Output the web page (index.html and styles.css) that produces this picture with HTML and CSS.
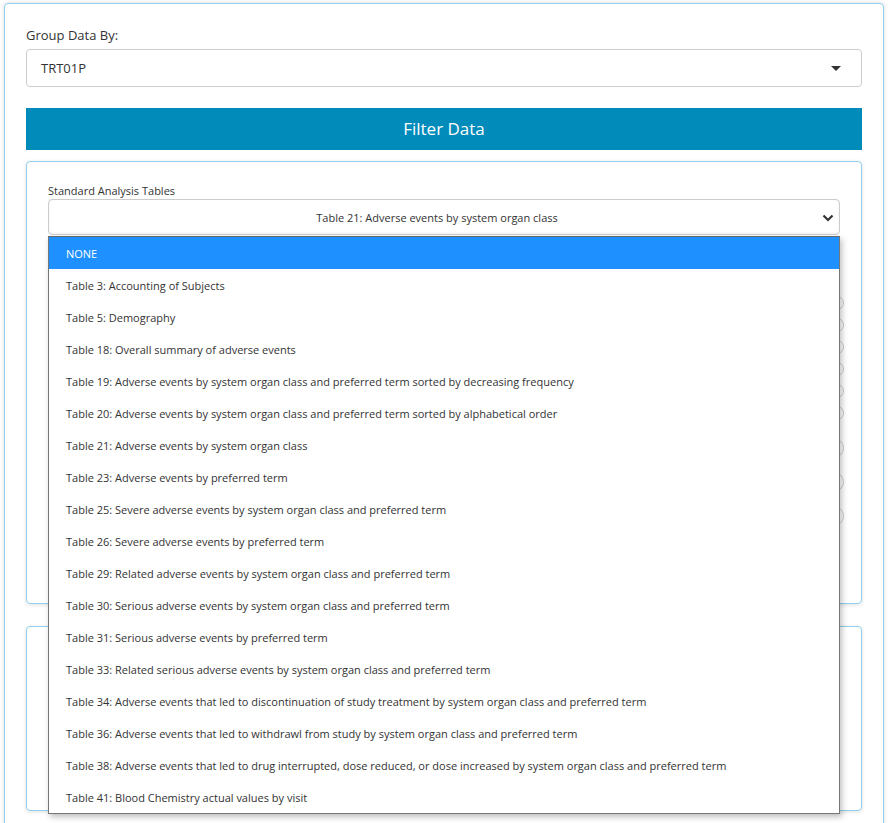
FILE: index.html
```html
<!DOCTYPE html>
<html lang="en">
<head>
  <meta charset="UTF-8" />
  <title>Analysis Tables</title>
  <link rel="stylesheet" href="styles.css">
</head>
<body>

<div class="panel">
  <label class="field-label">Group Data By:</label>
  <div class="group-select">
    <span>TRT01P</span>
    <span class="caret"></span>
  </div>

  <button class="filter-btn">Filter Data</button>

  <div class="card tables-card">
    <label class="small-label">Standard Analysis Tables</label>
    <div class="select-wrap">
      <div class="table-select">
        <span>Table 21: Adverse events by system organ class</span>
        <svg class="chevron" width="12" height="8" viewBox="0 0 12 8"><path d="M1.5 1.5 L6 6 L10.5 1.5" fill="none" stroke="#333" stroke-width="2.2"/></svg>
      </div>
      <ul class="dropdown">
        <li class="active">NONE</li>
        <li>Table 3: Accounting of Subjects</li>
        <li>Table 5: Demography</li>
        <li>Table 18: Overall summary of adverse events</li>
        <li>Table 19: Adverse events by system organ class and preferred term sorted by decreasing frequency</li>
        <li>Table 20: Adverse events by system organ class and preferred term sorted by alphabetical order</li>
        <li>Table 21: Adverse events by system organ class</li>
        <li>Table 23: Adverse events by preferred term</li>
        <li>Table 25: Severe adverse events by system organ class and preferred term</li>
        <li>Table 26: Severe adverse events by preferred term</li>
        <li>Table 29: Related adverse events by system organ class and preferred term</li>
        <li>Table 30: Serious adverse events by system organ class and preferred term</li>
        <li>Table 31: Serious adverse events by preferred term</li>
        <li>Table 33: Related serious adverse events by system organ class and preferred term</li>
        <li>Table 34: Adverse events that led to discontinuation of study treatment by system organ class and preferred term</li>
        <li>Table 36: Adverse events that led to withdrawl from study by system organ class and preferred term</li>
        <li>Table 38: Adverse events that led to drug interrupted, dose reduced, or dose increased by system organ class and preferred term</li>
        <li>Table 41: Blood Chemistry actual values by visit</li>
      </ul>
    </div>

    <!-- options underneath the open list -->
    <div class="options">
      <div class="opt"><span class="dot"></span></div>
      <div class="opt"><span class="dot"></span></div>
      <div class="opt"><span class="dot"></span></div>
      <div class="opt"><span class="dot"></span></div>
      <div class="opt"><span class="dot"></span></div>
      <div class="opt"><span class="dot"></span></div>
      <div class="opt big first-big"><span class="dot"></span></div>
      <div class="opt big"><span class="dot"></span></div>
      <div class="opt big"><span class="dot"></span></div>
    </div>
  </div>

  <div class="card second-card"></div>
</div>

</body>
</html>
```

FILE: styles.css
```css
html, body {
    margin: 0;
    padding: 0;
    background: #fff;
    font-family: 'Open Sans', sans-serif;
    color: #333;
    overflow: hidden;
}

.panel {
    margin: 3px 0 0 4px;
    width: 880px;
    box-sizing: border-box;
    border: 1px solid #8fd0ea;
    border-radius: 4px;
    padding: 21px 21px 10px 21px;
    box-shadow: 0 0 4px rgba(0,0,0,0.15);
    min-height: 840px;
}

.field-label {
    display: block;
    font-size: 13px;
    line-height: 20px;
    margin-bottom: 4px;
}

.group-select {
    height: 38px;
    box-sizing: border-box;
    border: 1px solid #ccc;
    border-radius: 4px;
    display: flex;
    align-items: center;
    justify-content: space-between;
    padding: 0 20px 0 14px;
    font-size: 13px;
}
.caret {
    width: 0;
    height: 0;
    border-left: 5px solid transparent;
    border-right: 5px solid transparent;
    border-top: 5px solid #333;
}

.filter-btn {
    display: block;
    width: 100%;
    height: 42px;
    margin-top: 21px;
    border: none;
    background: #008bba;
    color: #fff;
    font-family: 'Open Sans', sans-serif;
    font-size: 17px;
    padding-bottom: 2px;
}

.card {
    border: 1px solid #8fd0ea;
    border-radius: 4px;
    box-shadow: 0 1px 4px rgba(0,0,0,0.12);
    box-sizing: border-box;
}
.tables-card {
    margin-top: 11px;
    padding: 20px 21px 70px 21px;
    height: 443px;
}
.second-card {
    margin-top: 22px;
    height: 185px;
}

.small-label {
    display: block;
    font-size: 11px;
    line-height: 17px;
}

.select-wrap {
    position: relative;
}
.table-select {
    height: 36px;
    box-sizing: border-box;
    border: 1px solid #ccc;
    border-radius: 4px;
    box-shadow: inset 0 -1px 3px rgba(0,0,0,0.06);
    display: flex;
    align-items: center;
    justify-content: center;
    padding-right: 14px;
    font-size: 11px;
    position: relative;
}
.chevron {
    position: absolute;
    right: 5px;
    top: 14px;
}

.dropdown {
    position: absolute;
    top: 37px;
    left: 0;
    width: 790px;
    margin: 0;
    padding: 0;
    list-style: none;
    background: #fff;
    border: 1px solid #777;
    border-top: 1px solid #666;
    box-shadow: 2px 3px 6px rgba(0,0,0,0.25);
    z-index: 5;
}
.dropdown li {
    height: 32px;
    line-height: 33px;
    padding-left: 17px;
    font-size: 11px;
    color: #333;
    white-space: nowrap;
}
.dropdown li.active {
    background: #1e90ff;
    color: #fff;
}

.options {
    padding-top: 57px;
}
.opt {
    height: 22px;
    display: flex;
    align-items: center;
    justify-content: flex-end;
    margin-right: -4px;
}
.opt.big {
    height: 34px;
}
.opt.first-big {
    margin-top: 7px;
}
.dot {
    width: 12px;
    height: 12px;
    border: 1px solid #ccc;
    border-radius: 50%;
}
.opt.big .dot {
    width: 18px;
    height: 18px;
}
```
